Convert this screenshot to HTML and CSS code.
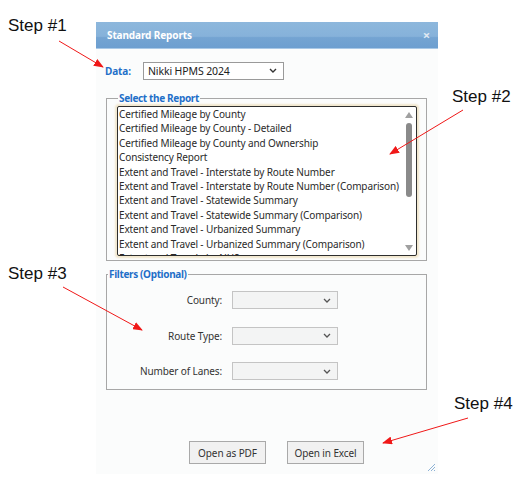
FILE: index.html
```html
<!DOCTYPE html>
<html lang="en">
<head>
    <meta charset="UTF-8">
    <meta name="viewport" content="width=device-width, initial-scale=1.0">
    <title>Standard Reports</title>
    <link rel="stylesheet" href="styles.css">
</head>
<body>

    <div class="page">
        <div class="dialog">
            <div class="titlebar">
                <span class="title">Standard Reports</span>
                <span class="close">&times;</span>
            </div>

            <div class="data-row">
                <span class="data-label">Data:</span>
                <div class="select select-data">
                    <span>Nikki HPMS 2024</span>
                    <svg class="chev" width="8" height="5" viewBox="0 0 8 5"><path d="M1 1 L4 4 L7 1" fill="none" stroke="#333" stroke-width="1.4"/></svg>
                </div>
            </div>

            <fieldset class="group">
                <legend>Select the Report</legend>
                <div class="listbox">
                    <div class="items">
                        <div>Certified Mileage by County</div>
                        <div>Certified Mileage by County - Detailed</div>
                        <div>Certified Mileage by County and Ownership</div>
                        <div>Consistency Report</div>
                        <div>Extent and Travel - Interstate by Route Number</div>
                        <div>Extent and Travel - Interstate by Route Number (Comparison)</div>
                        <div>Extent and Travel - Statewide Summary</div>
                        <div>Extent and Travel - Statewide Summary (Comparison)</div>
                        <div>Extent and Travel - Urbanized Summary</div>
                        <div>Extent and Travel - Urbanized Summary (Comparison)</div>
                        <div>Extent and Travel - by NHS</div>
                    </div>
                    <div class="scrollbar">
                        <span class="arrow up"></span>
                        <span class="thumb"></span>
                        <span class="arrow down"></span>
                    </div>
                </div>
            </fieldset>

            <fieldset class="group filters">
                <legend>Filters (Optional)</legend>
                <div class="filter-grid">
                    <label>County:</label>
                    <div class="select select-filter">
                        <svg class="chev" width="8" height="5" viewBox="0 0 8 5"><path d="M1 1 L4 4 L7 1" fill="none" stroke="#555" stroke-width="1.3"/></svg>
                    </div>
                    <label>Route Type:</label>
                    <div class="select select-filter">
                        <svg class="chev" width="8" height="5" viewBox="0 0 8 5"><path d="M1 1 L4 4 L7 1" fill="none" stroke="#555" stroke-width="1.3"/></svg>
                    </div>
                    <label>Number of Lanes:</label>
                    <div class="select select-filter">
                        <svg class="chev" width="8" height="5" viewBox="0 0 8 5"><path d="M1 1 L4 4 L7 1" fill="none" stroke="#555" stroke-width="1.3"/></svg>
                    </div>
                </div>
            </fieldset>

            <div class="buttons">
                <button>Open as PDF</button>
                <button>Open in Excel</button>
            </div>

            <!-- poignée de redimensionnement -->
            <svg class="grip" width="9" height="9" viewBox="0 0 9 9">
                <path d="M8 1 L1 8 M8 4 L4 8 M8 7 L7 8" stroke="#8fb3d6" stroke-width="1"/>
            </svg>
        </div>

        <!-- annotations -->
        <div class="step step1">Step #1</div>
        <div class="step step2">Step #2</div>
        <div class="step step3">Step #3</div>
        <div class="step step4">Step #4</div>

        <svg class="arrows" width="527" height="499" viewBox="0 0 527 499">
            <defs>
                <marker id="head" markerWidth="10" markerHeight="8" refX="9" refY="4" orient="auto" markerUnits="userSpaceOnUse">
                    <path d="M0 0 L10 4 L0 8 Z" fill="#f01818"/>
                </marker>
            </defs>
            <line x1="59" y1="41" x2="103" y2="67" stroke="#f01818" stroke-width="1" marker-end="url(#head)"/>
            <line x1="463" y1="110" x2="390" y2="154" stroke="#f01818" stroke-width="1" marker-end="url(#head)"/>
            <line x1="63" y1="287" x2="142" y2="330" stroke="#f01818" stroke-width="1" marker-end="url(#head)"/>
            <line x1="468" y1="418" x2="383" y2="443" stroke="#f01818" stroke-width="1" marker-end="url(#head)"/>
        </svg>
    </div>

</body>
</html>
```

FILE: styles.css
```css
* {
    margin: 0;
    padding: 0;
    box-sizing: border-box;
}
html, body {
    background: #ffffff;
}
body {
    font-family: "Noto Sans", "Open Sans", sans-serif;
    font-size: 10px;
    letter-spacing: -0.12px;
    color: #333;
}
.page {
    position: relative;
    width: 527px;
    height: 499px;
    padding: 22px 0 0 96px;
}
.dialog {
    position: relative;
    width: 342px;
    height: 452px;
    background: #fbfcfc;
}
.titlebar {
    height: 27px;
    display: flex;
    align-items: center;
    justify-content: space-between;
    padding: 0 8px 0 11px;
    background: linear-gradient(#8db7dc 0%, #86b2da 55%, #74a4d2 60%, #6d9fd0 100%);
    border-bottom: 1px solid #a9c8e6;
}
.title {
    color: #fff;
    font-weight: bold;
    font-size: 10px;
}
.close {
    color: #dfe8f2;
    font-weight: bold;
    font-size: 13px;
    line-height: 1;
}
.data-row {
    display: flex;
    align-items: center;
    padding: 13px 0 0 9px;
    height: 30px;
}
.data-label {
    color: #1f6fc8;
    font-weight: bold;
    width: 38px;
}
.select {
    height: 18px;
    display: flex;
    align-items: center;
    justify-content: space-between;
    padding: 0 6px 0 4px;
}
.select-data {
    width: 141px;
    background: #fff;
    border: 1px solid #9a9a9a;
    font-size: 10.5px;
    color: #222;
}
.select-filter {
    width: 106px;
    background: #f3f4f4;
    border: 1px solid #c4c4c4;
    justify-content: flex-end;
}
.group {
    margin: 12px 11px 0 10px;
    border: 1px solid #a7a7a7;
    padding: 1px 9px 4px 10px;
}
.group legend {
    color: #1f6fc8;
    font-weight: bold;
    letter-spacing: -0.35px;
    line-height: 14px;
    margin-left: 1px;
    padding: 0 1px;
}
.listbox {
    height: 150px;
    display: flex;
    border: 1px solid #2e2e2e;
    border-radius: 2px;
    background: #fff;
    box-shadow: 0 0 2px 2px #f1e6cc;
    overflow: hidden;
}
.items {
    flex: 1;
    padding-left: 1px;
    line-height: 14.4px;
    color: #2a2a2a;
    white-space: nowrap;
    overflow: hidden;
}
.scrollbar {
    width: 12px;
    display: flex;
    flex-direction: column;
    align-items: center;
    padding: 5px 0 4px;
    margin-right: 1px;
}
.arrow {
    width: 0;
    height: 0;
    border-left: 4px solid transparent;
    border-right: 4px solid transparent;
}
.arrow.up {
    border-bottom: 6px solid #a0a0a0;
}
.arrow.down {
    margin-top: auto;
    border-top: 6px solid #a0a0a0;
}
.thumb {
    width: 6px;
    height: 74px;
    margin-top: 5px;
    border-radius: 3px;
    background: #8a8a8a;
}
.filters {
    margin-top: 6px;
    padding: 10px 9px 9px 0;
}
.filter-grid {
    display: grid;
    grid-template-columns: 115px 106px;
    column-gap: 10px;
    row-gap: 17.5px;
    align-items: center;
}
.filter-grid label {
    text-align: right;
    color: #333;
    font-size: 10px;
}
.buttons {
    display: flex;
    gap: 21px;
    padding-left: 93px;
    margin-top: 51px;
}
button {
    width: 77px;
    height: 23px;
    font-family: "Noto Sans", "Open Sans", sans-serif;
    font-size: 10px;
    letter-spacing: -0.1px;
    color: #333;
    background: #f1f1f1;
    border: 1px solid #a9a9a9;
}
.grip {
    position: absolute;
    right: 2px;
    bottom: 2px;
}
.step {
    position: absolute;
    font-family: "Liberation Sans", Arial, sans-serif;
    font-size: 17px;
    letter-spacing: 0;
    line-height: 20px;
    color: #111;
}
.step1 { left: 8px; top: 16px; }
.step2 { left: 452px; top: 87px; }
.step3 { left: 8px; top: 264px; }
.step4 { left: 454px; top: 394px; }
.arrows {
    position: absolute;
    left: 0;
    top: 0;
    pointer-events: none;
}
```
